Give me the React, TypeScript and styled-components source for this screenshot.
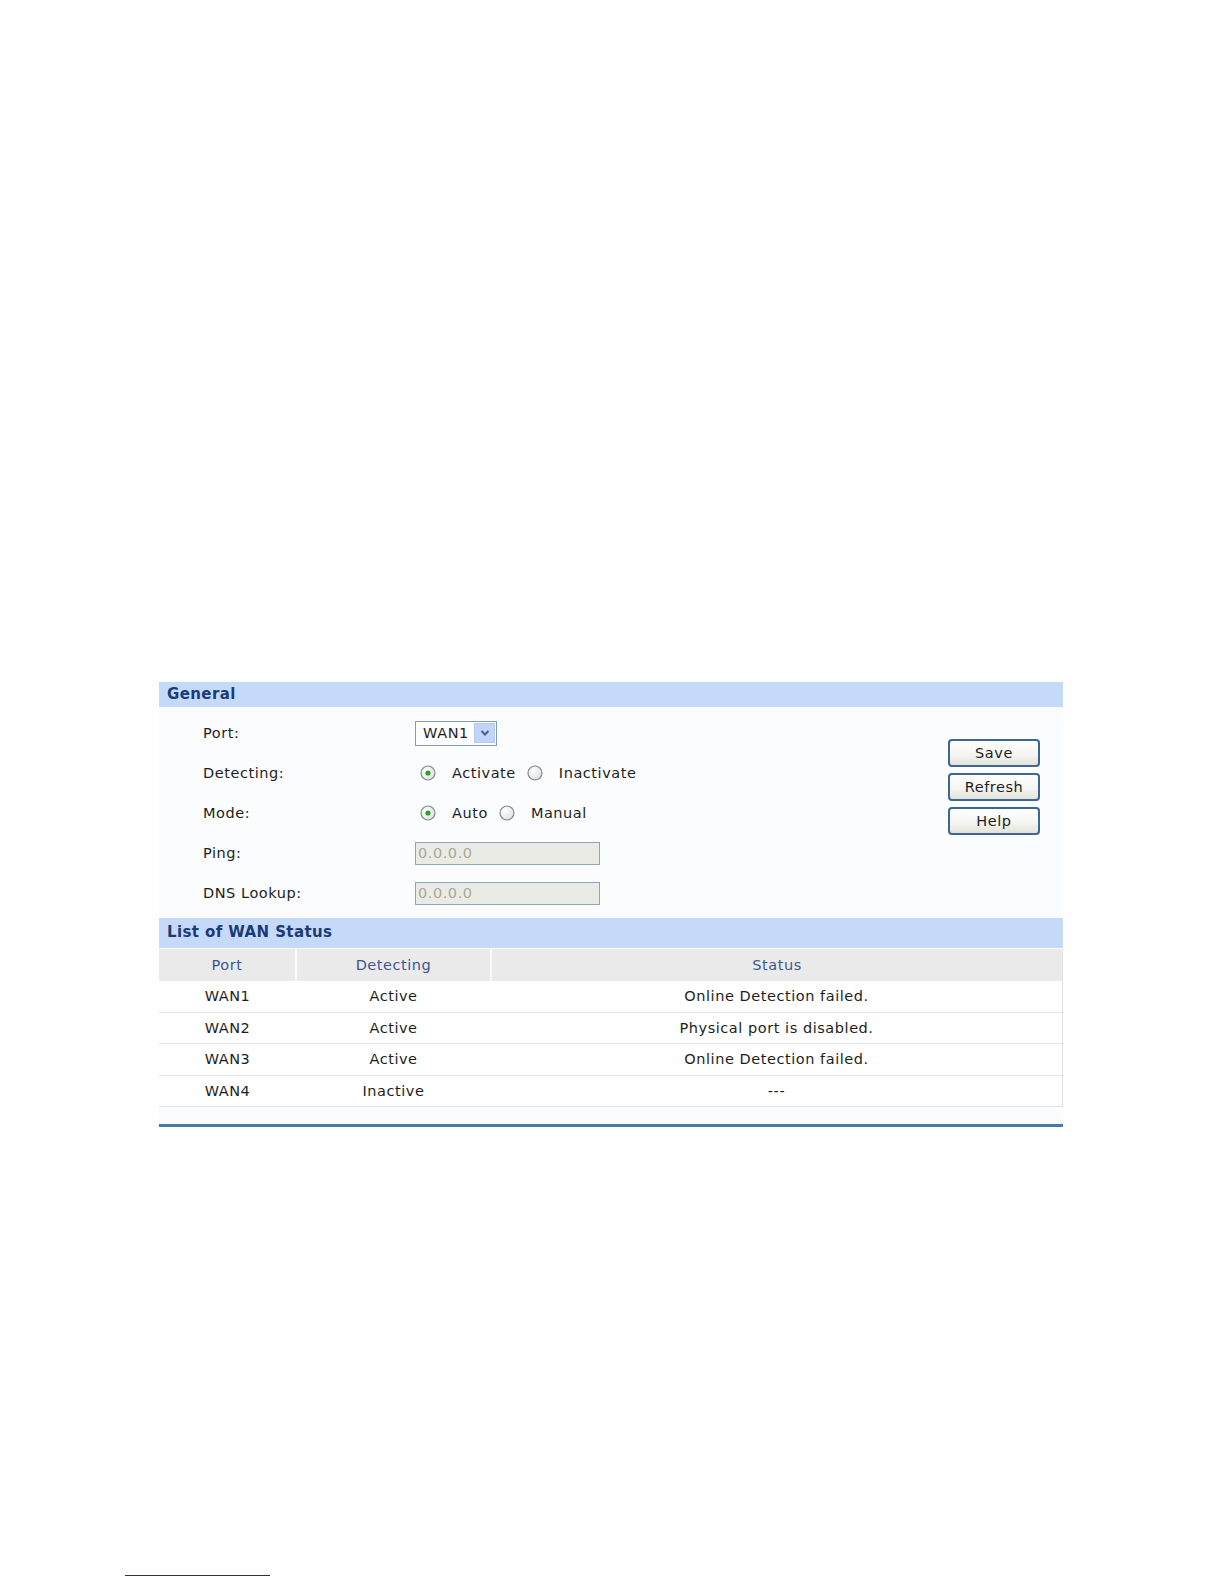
import styled, { createGlobalStyle } from 'styled-components'

const GlobalStyle = createGlobalStyle`
  html, body {
    margin: 0;
    padding: 0;
    background: #fefefe;
  }
  body {
    font-family: "DejaVu Sans", Tahoma, Verdana, sans-serif;
    font-size: 14.5px;
    letter-spacing: 0.55px;
    color: #1e1e1e;
  }
`

interface StatusRow {
  port: string
  detecting: string
  status: string
}

const rows: StatusRow[] = [
  { port: 'WAN1', detecting: 'Active', status: 'Online Detection failed.' },
  { port: 'WAN2', detecting: 'Active', status: 'Physical port is disabled.' },
  { port: 'WAN3', detecting: 'Active', status: 'Online Detection failed.' },
  { port: 'WAN4', detecting: 'Inactive', status: '---' },
]

const Radio = ({ checked }: { checked?: boolean }) => (
  <RadioIcon viewBox="0 0 16 16" width={16} height={16}>
    <defs>
      <radialGradient id="rg" cx="0.35" cy="0.35" r="0.8">
        <stop offset="0" stopColor="#ffffff" />
        <stop offset="1" stopColor="#dcdcd6" />
      </radialGradient>
    </defs>
    <circle cx="8" cy="8" r="7" fill="url(#rg)" stroke="#7b8a98" strokeWidth="1.2" />
    {checked && <circle cx="8" cy="8" r="2.6" fill="#2ea02e" />}
  </RadioIcon>
)

export default function App() {
  return (
    <>
      <GlobalStyle />
      <Page>
        <Panel>
          <SectionTitle>General</SectionTitle>
          <FormArea>
            <Fields>
              <FieldRow>
                <Label>Port:</Label>
                <Select>
                  <SelectValue>WAN1</SelectValue>
                  <SelectArrow>
                    <svg viewBox="0 0 10 8" width={10} height={8}>
                      <path d="M1.5 2 L5 5.5 L8.5 2" fill="none" stroke="#4d6185" strokeWidth="2" />
                    </svg>
                  </SelectArrow>
                </Select>
              </FieldRow>
              <FieldRow>
                <Label>Detecting:</Label>
                <Options>
                  <Radio checked />
                  <OptionText>Activate</OptionText>
                  <Radio />
                  <OptionText>Inactivate</OptionText>
                </Options>
              </FieldRow>
              <FieldRow>
                <Label>Mode:</Label>
                <Options>
                  <Radio checked />
                  <OptionText>Auto</OptionText>
                  <Radio />
                  <OptionText>Manual</OptionText>
                </Options>
              </FieldRow>
              <FieldRow>
                <Label>Ping:</Label>
                <TextInput>0.0.0.0</TextInput>
              </FieldRow>
              <FieldRow>
                <Label>DNS Lookup:</Label>
                <TextInput>0.0.0.0</TextInput>
              </FieldRow>
            </Fields>
            <Buttons>
              <Button>Save</Button>
              <Button>Refresh</Button>
              <Button>Help</Button>
            </Buttons>
          </FormArea>

          <SectionTitle $tall>List of WAN Status</SectionTitle>
          <Table>
            <thead>
              <tr>
                <Th $w={136}>Port</Th>
                <Th $w={193}>Detecting</Th>
                <Th>Status</Th>
              </tr>
            </thead>
            <tbody>
              {rows.map((r) => (
                <tr key={r.port}>
                  <Td>{r.port}</Td>
                  <Td>{r.detecting}</Td>
                  <Td>{r.status}</Td>
                </tr>
              ))}
            </tbody>
          </Table>
          <BottomRule />
        </Panel>
        <Footnote />
      </Page>
    </>
  )
}

const Page = styled.div`
  padding: 682px 0 0 159px;
  min-height: 1584px;
  box-sizing: border-box;
`

const Panel = styled.div`
  width: 904px;
  background: #fbfcfd;
`

const SectionTitle = styled.div<{ $tall?: boolean }>`
  height: ${({ $tall }) => ($tall ? '30px' : '25px')};
  line-height: ${({ $tall }) => ($tall ? '29px' : '24px')};
  padding-left: 8px;
  background: #c5daf8;
  color: #1b3a79;
  font-weight: bold;
  font-size: 15px;
  letter-spacing: 0.4px;
`

const FormArea = styled.div`
  display: flex;
  justify-content: space-between;
  padding: 6px 23px 5px 44px;
  height: 211px;
  box-sizing: border-box;
`

const Fields = styled.div`
  display: flex;
  flex-direction: column;
`

const FieldRow = styled.div`
  display: flex;
  align-items: center;
  height: 40px;
`

const Label = styled.span`
  width: 212px;
`

const Select = styled.div`
  display: flex;
  align-items: center;
  width: 82px;
  height: 25px;
  box-sizing: border-box;
  border: 1px solid #7f9db9;
  background: #fff;
  padding: 0 1px 0 7px;
`

const SelectValue = styled.span`
  flex: 1;
  letter-spacing: 0.6px;
`

const SelectArrow = styled.span`
  display: flex;
  align-items: center;
  justify-content: center;
  width: 21px;
  height: 20px;
  background: #c2d4f9;
  border: 1px solid #b6c9ef;
  box-sizing: border-box;
`

const Options = styled.div`
  display: flex;
  align-items: center;
  padding-left: 5px;
`

const RadioIcon = styled.svg`
  display: block;
  margin-right: 16px;
`

const OptionText = styled.span`
  margin-right: 11px;
`

const TextInput = styled.div`
  width: 185px;
  height: 23px;
  box-sizing: border-box;
  border: 1px solid #8fa5bd;
  background: #ebebe5;
  color: #aca899;
  line-height: 21px;
  padding-left: 2px;
`

const Buttons = styled.div`
  display: flex;
  flex-direction: column;
  gap: 6px;
  padding-top: 26px;
`

const Button = styled.div`
  width: 92px;
  height: 28px;
  box-sizing: border-box;
  border: 2px solid #3d6690;
  border-radius: 4px;
  background: linear-gradient(#ffffff, #f4f4f0 60%, #e3e3db);
  display: flex;
  align-items: center;
  justify-content: center;
`

const Table = styled.table`
  width: 100%;
  border-collapse: collapse;
  border-right: 1px solid #e2e2e2;
  margin-top: 1px;
`

const Th = styled.th<{ $w?: number }>`
  width: ${({ $w }) => ($w ? `${$w}px` : 'auto')};
  height: 32px;
  background: #eaeaea;
  color: #3a5896;
  font-weight: normal;
  border-left: 2px solid #fafafa;
  padding: 0;
  &:first-child {
    border-left: none;
  }
`

const Td = styled.td`
  height: 30.5px;
  text-align: center;
  border-bottom: 1px solid #e4e4e4;
  background: #ffffff;
  padding: 0;
`

const BottomRule = styled.div`
  margin-top: 17px;
  height: 3px;
  background: #4a7aa8;
`

const Footnote = styled.div`
  width: 145px;
  height: 1px;
  margin: 448px 0 0 -34px;
  background: #333;
`
